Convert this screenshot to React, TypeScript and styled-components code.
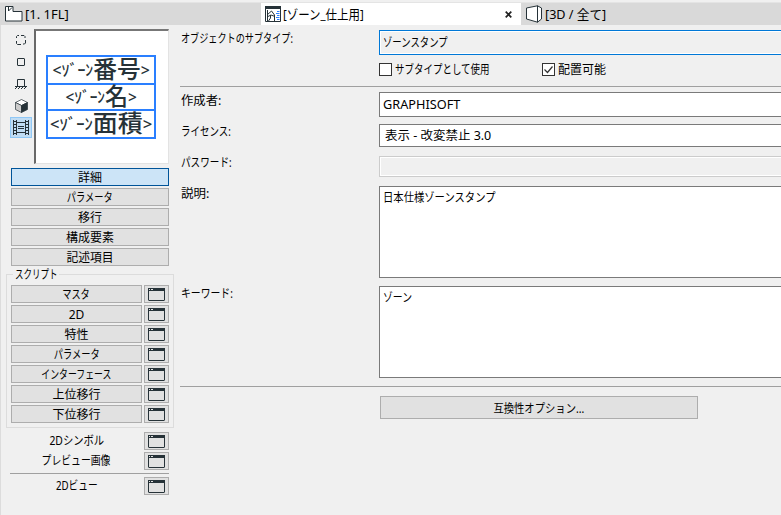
import React from "react";
import styled, { createGlobalStyle } from "styled-components";

const GlobalStyle = createGlobalStyle`
  * {
    box-sizing: border-box;
  }

  body {
    margin: 0;
    overflow: hidden;
    background: #f0f0f0;
    color: #000;
    font-family: "Noto Sans", "Noto Sans CJK JP", sans-serif;
    font-size: 12px;
    line-height: 16px;
  }
`;

const Window = styled.div`
  display: flex;
  flex-direction: column;
  width: 781px;
  height: 515px;
  padding-top: 2px;
`;

const TabBar = styled.div`
  display: flex;
  flex: none;
  height: 23px;
  background: #d9d9d9;
  border-top: 1px solid #e4e4e4;
`;

const Tab = styled.div<{ $width: number; $active?: boolean }>`
  display: flex;
  align-items: center;
  width: ${p => p.$width}px;
  padding-left: 4px;
  background: ${p => (p.$active ? "#fff" : "#d9d9d9")};
  font-size: 13px;

  svg {
    flex: none;
    margin-right: 2px;
  }
`;

const CloseIcon = styled.svg`
  && {
    margin: 0 9px 0 auto;
  }
`;

const Body = styled.div`
  display: flex;
  flex: 1;
  border-left: 1px solid #dcdcdc;
`;

const Squeezed = styled.span<{ $scale: number; $origin: string }>`
  display: inline-block;
  flex: none;
  white-space: nowrap;
  transform: scaleX(${p => p.$scale});
  transform-origin: ${p => p.$origin} center;
`;

const Sidebar = styled.div`
  display: flex;
  flex-direction: column;
  width: 174px;
  padding: 4px 0 0 5px;
`;

const Top = styled.div`
  display: flex;
  height: 139px;
  padding-left: 4px;
`;

const Tools = styled.div`
  display: flex;
  flex-direction: column;
  width: 24px;
`;

const Tool = styled.div<{ $active?: boolean }>`
  display: flex;
  align-items: center;
  justify-content: center;
  width: 22px;
  height: ${p => (p.$active ? 21 : 22)}px;
  background: ${p => (p.$active ? "#c0dcf3" : "transparent")};
  border: 1px solid ${p => (p.$active ? "#90c8f6" : "transparent")};
`;

const Preview = styled.div`
  width: 135px;
  height: 135px;
  padding: 24px 0 0 10px;
  background: #fff;
  border: 2px solid #696969;
  border-top-color: #777;
  border-right: 1px solid #e3e3e3;
  border-bottom: 1px solid #e3e3e3;
`;

const Stamp = styled.div`
  display: flex;
  flex-direction: column;
  width: 110px;
  height: 84px;
  border: 2px solid #2a7fff;
`;

const StampRow = styled.div<{ $height: number }>`
  display: flex;
  align-items: center;
  justify-content: center;
  height: ${p => p.$height}px;
  padding-bottom: 2px;
  color: #263238;
  font-size: 16px;
  font-weight: 500;
  line-height: 20px;

  & + & {
    border-top: 2px solid #2a7fff;
  }
`;

const StampKanji = styled.span`
  font-size: 24px;
  line-height: 20px;
  vertical-align: -2px;
`;

const Buttons = styled.div`
  display: flex;
  flex-direction: column;
  gap: 2px;
  padding-left: 5px;
`;

const Button = styled.div<{ $width: number; $active?: boolean }>`
  display: flex;
  align-items: center;
  justify-content: center;
  width: ${p => p.$width}px;
  height: 18px;
  background: ${p => (p.$active ? "#cce4f7" : "#e1e1e1")};
  border: 1px solid ${p => (p.$active ? "#005499" : "#adadad")};

  span {
    padding-top: 2px;
  }
`;

const Group = styled.div`
  width: 168px;
  height: 154px;
  margin: 8px 0 4px;
  padding: 0 4px;
  border: 1px solid #dcdcdc;
`;

const Legend = styled.div`
  width: 46px;
  height: 16px;
  margin: -8px 0 2px 2px;
  padding-left: 2px;
  background: #f0f0f0;
`;

const Rows = styled.div`
  display: flex;
  flex-direction: column;
  gap: 2px;
`;

const Row = styled.div`
  display: flex;
  gap: 2px;
`;

const PlainRow = styled(Row)`
  margin: 0 0 2px 5px;
`;

const Caption = styled.div`
  display: flex;
  align-items: center;
  justify-content: center;
  width: 131px;
  height: 18px;
`;

const SideLine = styled.div`
  width: 159px;
  height: 1px;
  margin: 1px 0 3px 4px;
  background: #a0a0a0;
`;

const Main = styled.div`
  flex: 1;
  padding-top: 5px;
`;

const Line = styled.div<{ $gap: number }>`
  height: 1px;
  margin: 0 0 ${p => p.$gap}px 5px;
  background: #a0a0a0;
`;

const FieldRow = styled.div<{ $gap: number }>`
  display: flex;
  margin-bottom: ${p => p.$gap}px;
`;

const Label = styled.div<{ $top: number }>`
  flex: none;
  width: 204px;
  height: 16px;
  margin-top: ${p => p.$top}px;
  padding-left: 6px;
`;

type FieldKind = "focus" | "normal" | "disabled";

const borders = { focus: "#0078d7", normal: "#7a7a7a", disabled: "#cccccc" };

const Field = styled.div<{ $height: number; $top: number; $kind: FieldKind; $indent?: number }>`
  flex: 1;
  height: ${p => p.$height}px;
  padding: ${p => p.$top}px 0 0 ${p => p.$indent || 3}px;
  background: ${p => (p.$kind === "normal" ? "#fff" : "#f0f0f0")};
  border: 1px solid ${p => borders[p.$kind]};
  border-right: 0;
  box-shadow: inset 1px 1px #fff, inset 0 -1px #fff;
`;

const Checks = styled.div`
  display: flex;
  height: 23px;
  padding: 0 0 0 204px;
`;

const Check = styled.div`
  display: flex;
  align-items: center;
  width: 163px;
  height: 13px;
  gap: 3px;
`;

const CheckBox = styled.div`
  width: 13px;
  height: 13px;
  background: #fff;
  border: 1px solid #333;

  svg {
    display: block;
  }
`;

const OptionButton = styled(Button)`
  height: 23px;
  margin-left: 205px;
`;

interface TextProps {
  children: string;
  scale?: number;
  left?: boolean;
}

const Text = ({ children, scale = 1, left }: TextProps) => (
  <Squeezed $scale={scale} $origin={left ? "left" : "center"}>
    {children}
  </Squeezed>
);

const WindowIcon = () => (
  <svg width="17" height="13" viewBox="0 0 17 13">
    <rect x="0.5" y="0.5" width="16" height="12" rx="0.5" fill="none" stroke="#263238" />
    <path d="M0 0h17v3H0z" fill="#263238" />
    <path d="M1 1.5h1M3 1.5h2" stroke="#e1e1e1" />
  </svg>
);

const pages = [
  { name: "詳細", scale: 1 },
  { name: "パラメータ", scale: 0.77 },
  { name: "移行", scale: 1 },
  { name: "構成要素", scale: 1 },
  { name: "記述項目", scale: 0.98 },
];

const scripts = [
  { name: "マスタ", scale: 0.77 },
  { name: "2D", scale: 1 },
  { name: "特性", scale: 1 },
  { name: "パラメータ", scale: 0.77 },
  { name: "インターフェース", scale: 0.74 },
  { name: "上位移行", scale: 1 },
  { name: "下位移行", scale: 1 },
];

const stamps = [
  { kanji: "番号", height: 26, scale: 0.99 },
  { kanji: "名", height: 26, scale: 0.96 },
  { kanji: "面積", height: 28, scale: 1.04 },
];

const WindowRow = ({ name, scale }: { name: string; scale: number }) => (
  <PlainRow>
    <Caption>
      <Text scale={scale}>{name}</Text>
    </Caption>
    <Button $width={25}>
      <WindowIcon />
    </Button>
  </PlainRow>
);

export default function App() {
  return (
    <Window>
      <GlobalStyle />
      <TabBar>
        <Tab $width={261}>
          <svg width="19" height="16" viewBox="0 0 19 16" fill="#fff" stroke="#263238">
            <path d="M1.5.5h7.500v5h9v9.500h-16.500z" />
            <path d="M4.500 1v4l3.500-3.500" fill="none" />
          </svg>
          <Text left>[1. 1FL]</Text>
        </Tab>
        <Tab $width={260} $active>
          <svg width="16" height="16" viewBox="0 0 16 16" fill="none" stroke="#263238">
            <path d="M.5.5h15v15H.5z" />
            <path d="M0 1.500h16" strokeWidth="3" />
            <path d="M2.500 4v11M2 9l4.500-4 3 4v6M3 10.500l3-1.500 4 1.500M5.500 9v3l-2 3" />
            <path d="M12 5.500h2.500M11 7.500h3.500M12 9.500h2.500M11 11.500h3.500M12 13.500h2.500" stroke="#2a7fff" />
          </svg>
          <Text scale={0.88} left>[ゾーン_仕上用]</Text>
          <CloseIcon width="7" height="7" viewBox="0 0 7 7">
            <path d="M.7.7l5.600 5.600M6.300.7L.7 6.300" stroke="#222" strokeWidth="1.700" />
          </CloseIcon>
        </Tab>
        <Tab $width={259}>
          <svg width="18" height="18" viewBox="0 0 18 18" fill="#fff" stroke="#263238">
            <path d="M1.500 3l11-2.200v16.400l-11-3.200z" />
            <path d="M12.500.8l4 2.200v11l-4 3.200z" />
          </svg>
          <Text scale={0.97} left>[3D / 全て]</Text>
        </Tab>
      </TabBar>
      <Body>
        <Sidebar>
          <Top>
            <Tools>
              <Tool>
                <svg width="10" height="10" viewBox="0 0 10 10" fill="none" stroke="#263238">
                  <path d="M.5 3V1.500l1-1H3M5 .5h3l1 1V3M9.500 5v3l-1 1H7M5 9.500H1.500l-1-1V6" />
                </svg>
              </Tool>
              <Tool>
                <svg width="8" height="8" viewBox="0 0 8 8" fill="none" stroke="#263238">
                  <rect x=".5" y=".5" width="7" height="7" rx="0.5" />
                </svg>
              </Tool>
              <Tool>
                <svg width="12" height="10" viewBox="0 0 12 10" fill="none" stroke="#263238">
                  <path d="M2.500 7V.5h7V7M0 7.500h12M2 8l-2 2M5 8l-2 2M8 8l-2 2M11 8l-2 2" />
                </svg>
              </Tool>
              <Tool>
                <svg width="13" height="14" viewBox="0 0 13 14" stroke="#263238" strokeWidth=".7">
                  <path d="M.5 3.500l6-3 6 3-6 3z" fill="#fff" />
                  <path d="M.5 3.500l6 3v7l-6-3z" fill="#ccc" />
                  <path d="M12.500 3.500l-6 3v7l6-3z" fill="#263238" />
                </svg>
              </Tool>
              <Tool $active>
                <svg width="16" height="15" viewBox="0 0 16 15" fill="none" stroke="#263238">
                  <path d="M.5 0v15M3.500 0v15M12.500 0v15M15.500 0v15M4 2.500h8M4 12.500h8M5 6.500h6M5 8.500h6" />
                  <path d="M2 1v14M14 1v14" strokeWidth="2" strokeDasharray="1 2" />
                </svg>
              </Tool>
            </Tools>
            <Preview>
              <Stamp>
                {stamps.map(s => (
                  <StampRow key={s.kanji} $height={s.height}>
                    <Squeezed $scale={s.scale} $origin="center">
                      &lt;ｿﾞｰﾝ<StampKanji>{s.kanji}</StampKanji>&gt;
                    </Squeezed>
                  </StampRow>
                ))}
              </Stamp>
            </Preview>
          </Top>
          <Buttons>
            {pages.map((p, i) => (
              <Button key={p.name} $width={158} $active={i === 0}>
                <Text scale={p.scale}>{p.name}</Text>
              </Button>
            ))}
          </Buttons>
          <Group>
            <Legend>
              <Text scale={0.71} left>スクリプト</Text>
            </Legend>
            <Rows>
              {scripts.map(s => (
                <Row key={s.name}>
                  <Button $width={131}>
                    <Text scale={s.scale}>{s.name}</Text>
                  </Button>
                  <Button $width={25}>
                    <WindowIcon />
                  </Button>
                </Row>
              ))}
            </Rows>
          </Group>
          <WindowRow name="2Dシンボル" scale={0.86} />
          <WindowRow name="プレビュー画像" scale={0.82} />
          <SideLine />
          <WindowRow name="2Dビュー" scale={0.81} />
        </Sidebar>
        <Main>
          <FieldRow $gap={8}>
            <Label $top={1}>
              <Text scale={0.76} left>オブジェクトのサブタイプ:</Text>
            </Label>
            <Field $height={25} $top={4} $kind="focus">
              <Text scale={0.78} left>ゾーンスタンプ</Text>
            </Field>
          </FieldRow>
          <Checks>
            <Check>
              <CheckBox />
              <Text scale={0.79} left>サブタイプとして使用</Text>
            </Check>
            <Check>
              <CheckBox>
                <svg width="11" height="11" viewBox="0 0 11 11">
                  <path d="M1.500 5.500l3 3 5-6" fill="none" stroke="#333" strokeWidth="1.200" />
                </svg>
              </CheckBox>
              <Text left>配置可能</Text>
            </Check>
          </Checks>
          <Line $gap={5} />
          <FieldRow $gap={7}>
            <Label $top={1}>
              <Text scale={1.03} left>作成者:</Text>
            </Label>
            <Field $height={25} $top={4} $kind="normal">
              <Text scale={1.06} left>GRAPHISOFT</Text>
            </Field>
          </FieldRow>
          <FieldRow $gap={9}>
            <Label $top={0}>
              <Text scale={0.79} left>ライセンス:</Text>
            </Label>
            <Field $height={23} $top={3} $kind="normal" $indent={5}>
              <Text scale={1.04} left>表示 - 改変禁止 3.0</Text>
            </Field>
          </FieldRow>
          <FieldRow $gap={9}>
            <Label $top={-1}>
              <Text scale={0.8} left>パスワード:</Text>
            </Label>
            <Field $height={21} $top={0} $kind="disabled" />
          </FieldRow>
          <FieldRow $gap={8}>
            <Label $top={0}>
              <Text scale={1.04} left>説明:</Text>
            </Label>
            <Field $height={92} $top={3} $kind="normal">
              <Text scale={0.86} left>日本仕様ゾーンスタンプ</Text>
            </Field>
          </FieldRow>
          <FieldRow $gap={8}>
            <Label $top={0}>
              <Text scale={0.82} left>キーワード:</Text>
            </Label>
            <Field $height={92} $top={3} $kind="normal">
              <Text scale={0.82} left>ゾーン</Text>
            </Field>
          </FieldRow>
          <Line $gap={9} />
          <OptionButton $width={318}>
            <Text scale={0.86}>互換性オプション...</Text>
          </OptionButton>
        </Main>
      </Body>
    </Window>
  );
}
